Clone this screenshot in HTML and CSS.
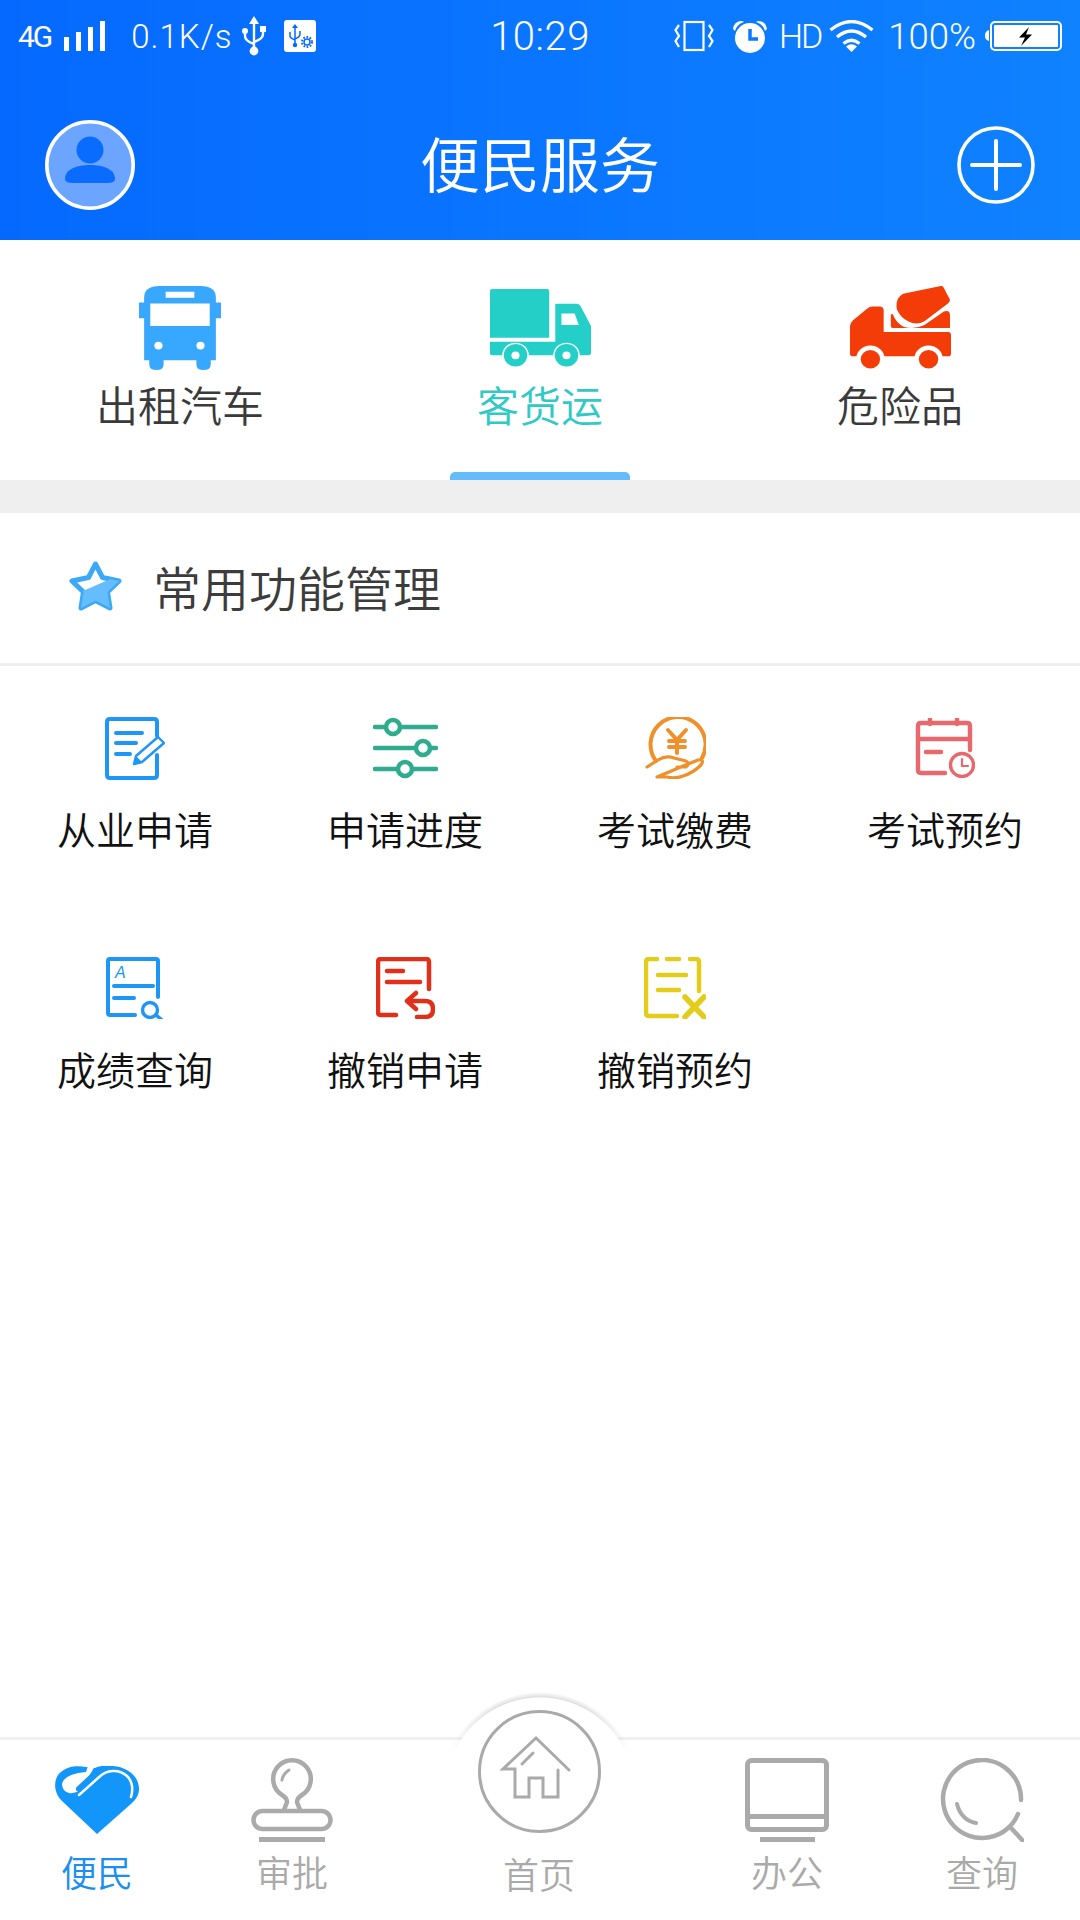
FILE: index.html
```html
<!DOCTYPE html>
<html lang="zh-CN">
<head>
<meta charset="utf-8">
<title>便民服务</title>
<link rel="stylesheet" href="styles.css">
</head>
<body>
<div class="app">
  <header class="header">
    <div class="status">
      <div class="status-left">
        <span class="net">4G</span>
        <svg class="bars" width="41" height="30" viewBox="0 0 41 30"><path fill="#fff" d="M0 16h5v14H0zM12 11h5v19h-5zM24 6h5v24h-5zM36 0h5v30h-5z"/></svg>
        <span class="speed">0.1K/s</span>
        <svg class="usb" width="24" height="40" viewBox="0 0 24 40"><g fill="none" stroke="#fff" stroke-width="2.4"><path d="M12 6v28M3 15v5q0 5 9 8M21 13v5q0 5-9 8"/></g><path fill="#fff" d="M12 0l5 8H7z"/><circle fill="#fff" cx="12" cy="35" r="4.4"/><circle fill="#fff" cx="3" cy="15" r="3"/><path fill="#fff" d="M18 10h6v6h-6z"/></svg>
        <svg class="usb-box" width="32" height="32" viewBox="0 0 32 32"><rect fill="#fff" width="32" height="32" rx="3"/><g fill="none" stroke="#0569ff" stroke-width="1.5"><path d="M11 8v15M6 12v4q0 2 5 4M16 11v3q0 3-5 5"/><circle cx="23" cy="22" r="3"/></g><path fill="#0569ff" d="M11 4l3 4H8z"/><circle fill="#0569ff" cx="11" cy="25" r="2.2"/><circle fill="none" stroke="#0569ff" stroke-width="2" stroke-dasharray="1.6 1.6" cx="23" cy="22" r="5"/></svg>
      </div>
      <span class="clock">10:29</span>
      <div class="status-right">
        <svg class="vibrate" width="40" height="32" viewBox="0 0 40 32"><g fill="none" stroke="#fff" stroke-width="2.2"><rect x="10.5" y="2" width="19" height="28"/><path d="M5 5L1.500 10 5 16 1.500 21 5 27M35 5l3.500 5L35 16l3.500 5L35 27"/></g></svg>
        <svg class="alarm" width="34" height="33" viewBox="0 0 34 33"><circle fill="#fff" cx="17" cy="18" r="15"/><path fill="#fff" d="M0 9Q1 1 9 1L11 2Q4 4 2 11zM34 9Q33 1 25 1L23 2Q30 4 32 11z"/><path fill="none" stroke="#0a78ff" stroke-width="3.500" d="M17 9v10h8"/></svg>
        <span class="hd">HD</span>
        <svg class="wifi" width="45" height="32" viewBox="0 0 45 32"><g fill="none" stroke="#fff" stroke-width="3.200"><path d="M1.500 10Q22.500-7 43.500 10M8 17Q22.500 5 37 17M14.500 23.500Q22.500 17 30.500 23.500"/></g><path fill="#fff" d="M17 26.500Q22.500 22 28 26.500L22.500 32z"/></svg>
        <span class="pct">100%</span>
        <svg class="battery" width="77" height="30" viewBox="0 0 77 30"><path fill="#fff" d="M4 9v11Q0 19 0 14.500T4 9z"/><rect x="6" y="1" width="70" height="28" rx="4" fill="none" stroke="#fff" stroke-width="2"/><rect x="9" y="4" width="64" height="22" rx="1" fill="#fff"/><path fill="#000" d="M44 6L34 16.500h6L36 25l11-11.500h-6z"/></svg>
      </div>
    </div>
    <div class="titlebar">
      <svg class="avatar" width="90" height="92" viewBox="0 0 90 92"><circle cx="45" cy="46" r="43.200" fill="#6ba5ff" stroke="#fff" stroke-width="3.600"/><circle cx="45" cy="31" r="13.500" fill="#0a6cff"/><path fill="#0a6cff" d="M20 60C20 50 32 46 45 46S70 50 70 60Q70 64 62 64H28Q20 64 20 60z"/></svg>
      <h1 class="title">便民服务</h1>
      <svg class="add" width="78" height="80" viewBox="0 0 78 80"><g fill="none" stroke="#fff" stroke-width="3.600"><circle cx="39" cy="40" r="37"/></g><path fill="none" stroke="#fff" stroke-width="4" stroke-linecap="round" d="M39 16v48M15 40h48"/></svg>
    </div>
  </header>

  <nav class="tabs">
    <a class="tab">
      <span class="tab-icon">
        <svg width="82" height="84" viewBox="0 0 80 86" preserveAspectRatio="none"><path fill="#38a8ff" d="M5 17V12Q5 0 20 0H60Q75 0 75 12V17H80V33H75V76H70V80Q70 86 63 86T56 80V76H24V80Q24 86 17 86T10 80V76H5V33H0V17z"/><path fill="#fff" d="M11 18H69V41H11zM26 6H54V12H26z"/><circle fill="#fff" cx="19" cy="61" r="4"/><circle fill="#fff" cx="60" cy="61" r="4"/></svg>
      </span>
      <span class="tab-label">出租汽车</span>
    </a>
    <a class="tab tab-active">
      <span class="tab-icon">
        <svg width="101" height="78" viewBox="0 0 99 80" preserveAspectRatio="none"><path fill="#23cfc7" d="M2 0H56Q58 0 58 2V50H0V2Q0 0 2 0zM64 15H85Q88 15 90 20L99 38V66Q99 68 96 68H64zM0 54H64V68H2Q0 68 0 66z"/><path fill="#fff" d="M70 25H83L87 37H70z"/><circle fill="#fff" cx="25" cy="68" r="13"/><circle fill="#fff" cx="75" cy="68" r="13"/><circle fill="#23cfc7" cx="25" cy="68" r="11.500"/><circle fill="#23cfc7" cx="75" cy="68" r="11.500"/><circle fill="#fff" cx="25" cy="68" r="4"/><circle fill="#fff" cx="75" cy="68" r="4"/></svg>
      </span>
      <span class="tab-label">客货运</span>
    </a>
    <a class="tab">
      <span class="tab-icon">
        <svg width="101" height="84" viewBox="0 0 99 86" preserveAspectRatio="none"><path fill="#f33c08" d="M0 41Q0 38 3 35L17 23Q19 21 22 21H29Q33 21 33 25V47H96Q99 47 99 50V69Q99 72 96 72H3Q0 72 0 69z"/><path fill="#f33c08" d="M52 8L89 0Q91-.5 92 2L98 14Q98 16 96 18L73 36Q65 41 57 36Q50 33 46 24Q44 13 52 8z"/><path fill="#f33c08" d="M40 29L42 29Q45 38 53 42Q63 45 73 40L92 26Q98 24 98 30V43H42Q40 43 40 41z"/><circle fill="#fff" cx="20" cy="75" r="14"/><circle fill="#fff" cx="77" cy="75" r="14"/><circle fill="#f33c08" cx="20" cy="75" r="9.500"/><circle fill="#f33c08" cx="77" cy="75" r="9.500"/></svg>
      </span>
      <span class="tab-label">危险品</span>
    </a>
    <span class="tab-marker"></span>
  </nav>

  <div class="band"></div>

  <section class="manage">
    <svg class="star" width="53" height="50" viewBox="0 0 53 50"><defs><clipPath id="star-lower"><path d="M0 36L53 13V50H0z"/></clipPath></defs><path fill="#fff" stroke="#3ba8f8" stroke-width="5" stroke-linejoin="round" d="M26.500 3L33.500 16.500 50 20 38.500 31 41 47 26.500 39.500 12 47 14.500 31 3 20 19.500 16.500z"/><path clip-path="url(#star-lower)" fill="#66bdfd" d="M26.500 3L33.500 16.500 50 20 38.500 31 41 47 26.500 39.500 12 47 14.500 31 3 20 19.500 16.500z"/></svg>
    <h2 class="manage-title">常用功能管理</h2>
  </section>

  <main class="grid">
    <a class="cell">
      <span class="cell-icon">
        <svg width="60" height="63" viewBox="0 0 60 63"><g fill="none" stroke="#1e96f5" stroke-width="4" stroke-linecap="round"><path d="M52 19V5Q52 2 49 2H5Q2 2 2 5V58Q2 61 5 61H49Q52 61 52 58V38"/><path d="M11 16H37M11 26H31M11 37H25"/></g><path fill="none" stroke="#1e96f5" stroke-width="2.400" stroke-linejoin="round" d="M29 47L31 39 53 20 59 26 37 45z"/><path fill="#1e96f5" d="M28.500 48L31 39 37 45z"/></svg>
      </span>
      <span class="cell-label">从业申请</span>
    </a>
    <a class="cell">
      <span class="cell-icon">
        <svg width="65" height="62" viewBox="0 0 65 62"><g fill="#fff" stroke="#2fab8e" stroke-width="4.500"><path stroke-linecap="round" d="M2 10H63M2 31H63M2 52H63"/><circle cx="20" cy="10" r="7"/><circle cx="50" cy="31" r="7"/><circle cx="32" cy="52" r="7"/></g></svg>
      </span>
      <span class="cell-label">申请进度</span>
    </a>
    <a class="cell">
      <span class="cell-icon">
        <svg width="61" height="62" viewBox="0 0 61 62"><g fill="none" stroke="#f0902a" stroke-linecap="round" stroke-linejoin="round"><path stroke-width="4" d="M11 44A27.500 27.500 0 1 1 57 41"/><path stroke-width="4" d="M23 13L32 23 41 13M32 23V36M24 24H40M24 30H40"/><path stroke-width="3.200" d="M2 50L13 43Q21 38 29 41L41 44Q46 47 41 50L32 50M43 47L53 43Q60 42 56 48Q48 56 38 59Q30 62 22 60L12 60z"/></g></svg>
      </span>
      <span class="cell-label">考试缴费</span>
    </a>
    <a class="cell">
      <span class="cell-icon">
        <svg width="60" height="60" viewBox="0 0 60 60"><g fill="none" stroke="#e8686e" stroke-linecap="round"><path stroke-width="4.400" d="M55 32V8Q55 5 52 5H6Q3 5 3 8V52Q3 55 6 55H30M15 1V6M42 1V6M4 21H54M11 34H26"/><circle stroke-width="3.400" cx="47" cy="47" r="11.500"/><path stroke-width="2.200" d="M47 41V48H53"/></g></svg>
      </span>
      <span class="cell-label">考试预约</span>
    </a>
    <a class="cell">
      <span class="cell-icon">
        <svg width="58" height="62" viewBox="0 0 58 62"><g fill="none" stroke="#1e96f5" stroke-linecap="round"><path stroke-width="4" d="M52 40V4Q52 2 50 2H4Q2 2 2 4V56Q2 58 4 58H29M8 29H47M8 41H28"/><circle stroke-width="3.400" cx="44" cy="53" r="7.500"/><path stroke-width="3.400" d="M50 58L56 63"/></g><text class="mark" x="9" y="21">A</text></svg>
      </span>
      <span class="cell-label">成绩查询</span>
    </a>
    <a class="cell">
      <span class="cell-icon">
        <svg width="59" height="62" viewBox="0 0 59 62"><g fill="none" stroke="#e0301a" stroke-width="4.500" stroke-linecap="round" stroke-linejoin="round"><path d="M53 32V5Q53 2 50 2H5Q2 2 2 5V55Q2 58 5 58H20M11 14H27M11 25H44"/><path d="M40 36L31 44 40 52M31 44H49Q57 44 57 52T49 60H41"/></g></svg>
      </span>
      <span class="cell-label">撤销申请</span>
    </a>
    <a class="cell">
      <span class="cell-icon">
        <svg width="62" height="62" viewBox="0 0 62 62"><g fill="none" stroke="#e3cd1a" stroke-width="4.500" stroke-linecap="round"><path d="M13 2H5Q2 2 2 5V56Q2 59 5 59H33M23 2H35M46 2H52Q55 2 55 5V34M14 18H42M14 33H35"/><path stroke-width="5.500" d="M41 40L60 60M60 40L41 60"/></g></svg>
      </span>
      <span class="cell-label">撤销预约</span>
    </a>
  </main>

  <footer class="dock">
    <span class="dock-bump"></span>
    <a class="dock-item dock-item-active">
      <span class="dock-icon">
        <svg width="84" height="68" viewBox="0 0 84 68"><path fill="#1296f9" d="M42 68L7 35C-2 26-2 12 6 6 14-1 24 0 31 1L40 2C44 0 50-1 58 0 72 1 84 10 84 23 84 29 81 33 77 37z"/><path fill="#fff" d="M33 0L40 0 26 24Q20 28 14 27 7 25 7 18 9 8 31 6z"/><path fill="none" stroke="#fff" stroke-width="2.500" stroke-linecap="round" d="M24 29L43 12C52 3 64 3 72 10 78 16 78 24 76 31"/><path fill="none" stroke="#1296f9" stroke-width="6" stroke-linecap="round" d="M24 23L40 8"/></svg>
      </span>
      <span class="dock-label">便民</span>
    </a>
    <a class="dock-item">
      <span class="dock-icon">
        <svg width="82" height="84" viewBox="0 0 82 84"><g fill="none" stroke="#aaa" stroke-width="4.500" stroke-linecap="round"><path d="M31 37A18.800 18.800 0 1 1 51 37Q46 40 46 44L49 52M31 37Q36 40 36 44L33 52"/><rect x="2.500" y="53" width="77" height="18" rx="9"/><path stroke-width="3" d="M31 22Q32 16 38 12"/></g><path fill="#aaa" d="M8 79H74V84H8z"/></svg>
      </span>
      <span class="dock-label">审批</span>
    </a>
    <a class="dock-home">
      <svg width="123" height="123" viewBox="0 0 123 123"><circle cx="61.500" cy="61.500" r="60" fill="#fff" stroke="#aaa" stroke-width="3"/><g fill="none" stroke="#aaa" stroke-width="3" stroke-linecap="round"><path d="M91 60L58 28 25 59H37V87H51V68H65V87H80V60"/><path d="M44 54L55 43"/></g></svg>
      <span class="dock-label">首页</span>
    </a>
    <a class="dock-item">
      <span class="dock-icon">
        <svg width="84" height="84" viewBox="0 0 84 84"><rect x="2.500" y="2.500" width="79" height="69" rx="4" fill="none" stroke="#aaa" stroke-width="5"/><path fill="#aaa" d="M2 56H82V61H2zM15 79H70V84H15z"/></svg>
      </span>
      <span class="dock-label">办公</span>
    </a>
    <a class="dock-item">
      <span class="dock-icon">
        <svg width="84" height="84" viewBox="0 0 84 84"><g fill="none" stroke="#aaa" stroke-width="4.500" stroke-linecap="round"><path d="M81 42A39 39 0 1 0 78 56"/><path d="M72 71L84 84"/><path stroke-width="4" d="M17 46Q21 62 36 65"/></g></svg>
      </span>
      <span class="dock-label">查询</span>
    </a>
  </footer>
</div>
</body>
</html>
```

FILE: styles.css
```css
* { box-sizing: border-box; }

html, body {
  margin: 0;
  padding: 0;
  background: #fff;
}

body {
  font-family: "Noto Sans CJK SC", "Noto Sans", sans-serif;
}

a { color: inherit; text-decoration: none; }
svg { display: block; flex: none; }

.app {
  position: relative;
  display: flex;
  flex-direction: column;
  width: 1080px;
  height: 1920px;
  overflow: hidden;
}

/* Blue header: system status row and page title */
.header {
  height: 240px;
  background: linear-gradient(90deg, #0569ff, #0f82ff);
  color: #fff;
}

.status {
  display: grid;
  grid-template-columns: 1fr auto 1fr;
  align-items: center;
  height: 72px;
  padding: 0 18px;
  font-family: Roboto, "Liberation Sans", sans-serif;
}

.status-left, .status-right {
  display: flex;
  align-items: center;
}

.status-right { justify-content: flex-end; }

.net { font-size: 30px; letter-spacing: -2px; margin-right: 13px; }
.speed { font-size: 33px; margin-left: 26px; margin-right: 10px; font-weight: 300; letter-spacing: 1px; }
.usb-box { margin-left: 18px; }
.clock { font-size: 40px; font-weight: 300; letter-spacing: .5px; }
.vibrate { margin-right: 19px; }
.alarm { margin-right: 12px; }
.hd { font-size: 34px; font-weight: 300; letter-spacing: -2px; margin-right: 8px; }
.pct { font-size: 36.500px; font-weight: 300; margin-left: 14px; margin-right: 9px; }

.titlebar {
  display: grid;
  grid-template-columns: 1fr auto 1fr;
  align-items: center;
  height: 168px;
  padding: 18px 45px 0;
}

.add { justify-self: end; }

.title {
  margin: 0 0 6px;
  font-size: 60px;
  font-weight: 350;
  line-height: 80px;
}

/* Service category tabs */
.tabs {
  position: relative;
  display: grid;
  grid-template-columns: repeat(3, 1fr);
  height: 240px;
  padding-top: 46px;
}

.tab {
  display: flex;
  flex-direction: column;
  align-items: center;
  color: #3a3a3a;
}

.tab-active { color: #2fc9c6; }

.tab-icon {
  display: flex;
  align-items: center;
  justify-content: center;
  height: 84px;
}

.tab-label {
  margin-top: 9px;
  font-size: 42px;
  font-weight: 350;
  line-height: 50px;
}

.tab-marker {
  position: absolute;
  left: 450px;
  bottom: 0;
  width: 180px;
  height: 8px;
  border-radius: 5px 5px 0 0;
  background: #64bcfb;
}

.band {
  height: 33px;
  background: #efefef;
}

.manage {
  display: flex;
  align-items: center;
  gap: 31px;
  height: 153px;
  padding: 0 0 4px 69px;
  border-bottom: 3px solid #f0f0f0;
}

.manage-title {
  margin: 0;
  font-size: 48px;
  font-weight: 350;
  color: #3c3c3c;
}

/* Shortcut grid */
.grid {
  flex: 1;
  display: grid;
  grid-template-columns: repeat(4, 270px);
  grid-auto-rows: 240px;
  align-content: start;
  padding-top: 50px;
}

.cell {
  display: flex;
  flex-direction: column;
  align-items: center;
  color: #111;
}

.cell-icon {
  display: flex;
  align-items: center;
  justify-content: center;
  height: 64px;
}

.cell-label {
  margin-top: 23px;
  font-size: 39px;
  font-weight: 350;
  line-height: 50px;
}

.mark {
  font: italic 16px "Liberation Sans", sans-serif;
  fill: #1e96f5;
}

/* Bottom navigation */
.dock {
  position: relative;
  display: grid;
  grid-template-columns: 194px 196px 300px 194px 196px;
  height: 183px;
  padding-top: 18px;
  border-top: 3px solid #f0f0f0;
  background: #fff;
}

/* Raised white disc behind the home button */
.dock-bump {
  position: absolute;
  left: 445px;
  top: -43px;
  width: 190px;
  height: 190px;
  border-radius: 50%;
  background: #fff;
}

/* Soft rim on the disc, visible only above the divider */
.dock-bump::before {
  content: "";
  position: absolute;
  inset: -5px;
  background: radial-gradient(circle, transparent 0 94px, rgba(0, 0, 0, .12) 95px, transparent 100px);
  -webkit-mask-image: linear-gradient(#000 8%, transparent 30%);
  mask-image: linear-gradient(#000 8%, transparent 30%);
}

.dock-item, .dock-home {
  position: relative;
  display: flex;
  flex-direction: column;
  align-items: center;
}

.dock-home { margin-top: -48px; color: #aaa; left: -1px; }
.dock-home .dock-label { margin-top: 18px; }

.dock-item { color: #aaa; }
.dock-item-active { color: #1a8fef; }

.dock-icon {
  display: flex;
  align-items: center;
  justify-content: center;
  height: 84px;
}

.dock-label {
  margin-top: 7px;
  font-size: 36px;
  font-weight: 350;
  line-height: 44px;
}
```
